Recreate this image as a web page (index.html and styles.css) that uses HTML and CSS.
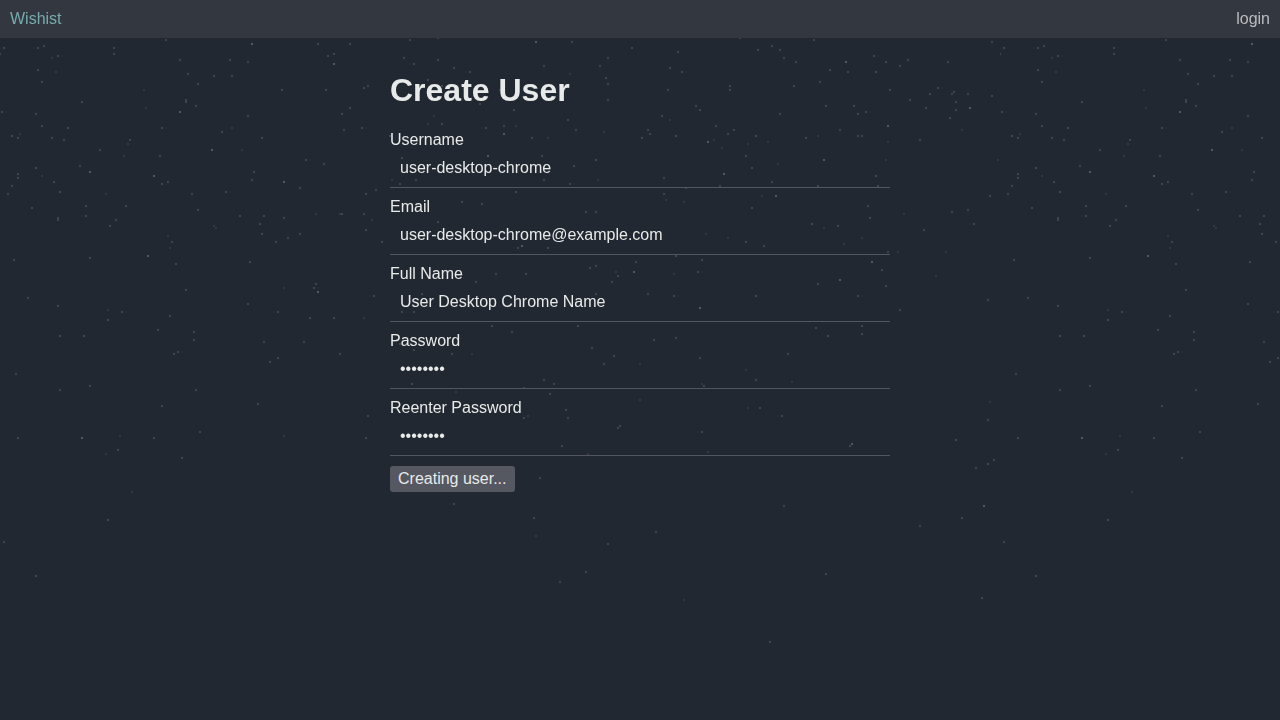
FILE: index.html
```html
<!DOCTYPE html>
<html lang="en">
<head>
  <meta charset="utf-8">
  <meta name="viewport" content="width=device-width, initial-scale=1">
  <title>Wishist</title>
  <link rel="stylesheet" href="styles.css">
</head>
<body>
  <svg class="stars" aria-hidden="true">
    <defs>
      <pattern id="sky" width="1000" height="1000" patternUnits="userSpaceOnUse">
        <g id="star-layers" class="star-layers"></g>
      </pattern>
    </defs>
    <rect width="100%" height="100%" fill="url(#sky)"/>
  </svg>
  <header class="topbar">
    <a class="brand" href="#">Wishist</a>
    <a class="login" href="#">login</a>
  </header>
  <main class="content">
    <h1 class="title">Create User</h1>
    <form class="form">
      <div class="field">
        <label for="username">Username</label>
        <input id="username" type="text" value="user-desktop-chrome">
      </div>
      <div class="field">
        <label for="email">Email</label>
        <input id="email" type="email" value="user-desktop-chrome@example.com">
      </div>
      <div class="field">
        <label for="name">Full Name</label>
        <input id="name" type="text" value="User Desktop Chrome Name">
      </div>
      <div class="field">
        <label for="password">Password</label>
        <input id="password" type="password" value="password">
      </div>
      <div class="field">
        <label for="password2">Reenter Password</label>
        <input id="password2" type="password" value="password">
      </div>
      <button class="submit" type="submit" disabled>Creating user...</button>
    </form>
  </main>
  <script src="stars.js"></script>
</body>
</html>
```
FILE: styles.css
```css
* {
  box-sizing: border-box;
}

body {
  margin: 0;
  min-height: 100vh;
  background: #222831;
  color: #e8eae9;
  font: 16px/18px "Liberation Sans", Arial, sans-serif;
}

.stars {
  position: fixed;
  inset: 0;
  z-index: -1;
  width: 100%;
  height: 100%;
}

.star-layers {
  fill: none;
  stroke-width: 2;
  stroke-linecap: square;
}

.star-bright {
  stroke: #555860;
}

.star-mid {
  stroke: #40444c;
}

.star-dim {
  stroke: #343941;
}

.topbar {
  display: flex;
  justify-content: space-between;
  padding: 10px;
  background: #33373f;
}

.topbar a {
  text-decoration: none;
}

.brand {
  color: #76abae;
}

.login {
  color: #bbbcbf;
}

.content {
  max-width: 520px;
  margin: 0 auto;
  padding: 34px 10px 10px;
}

.title {
  margin: 0 0 23px;
  font-size: 32px;
  line-height: 36px;
}

.form {
  display: flex;
  flex-direction: column;
  align-items: flex-start;
  gap: 10px;
}

.field {
  display: flex;
  flex-direction: column;
  width: 100%;
}

.field input {
  width: 100%;
  height: 39px;
  padding: 10px;
  border: 0;
  border-bottom: 1px solid #53565e;
  border-radius: 0;
  background: transparent;
  color: inherit;
  font: inherit;
  outline: none;
}

.submit {
  padding: 4px 8px;
  border: 0;
  border-radius: 3px;
  background: #555761;
  color: #e8eae9;
  font: inherit;
}
```
FILE: stars.js
```js
// Star centres as "x,y" pairs inside one 1000px tile, grouped by brightness.
const stars = {
  bright: `252,44 180,112 212,150 90,172 154,176 284,182 148,256 318,292 82,438
    536,42 334,64 504,134 488,156 522,246 634,272 846,62 888,126 708,142 824,160
    724,174 776,196 872,262 840,280 700,308 852,444 970,108 984,506`,
  mid: `166,40 318,44 44,46 4,48 38,48 114,48 114,54 0,54 58,56 180,60 230,60 248,62
    38,70 188,74 214,76 232,76 42,82 198,84 282,90 186,100 186,102 82,102 196,106
    2,112 36,114 248,116 42,126 68,128 162,128 222,132 12,136 18,138 52,138 262,138
    64,140 130,140 100,150 160,156 306,160 80,166 36,168 254,172 18,174 18,178
    252,180 54,182 168,182 162,184 12,186 300,188 60,192 226,192 8,194 192,194
    86,206 126,206 32,208 198,210 86,216 240,216 264,216 284,218 58,218 58,220
    116,220 260,224 110,226 262,234 300,234 288,238 172,242 276,242 90,258 14,260
    250,262 176,264 316,284 314,288 186,290 28,298 248,304 58,306 122,312 278,312
    170,316 310,318 108,320 158,330 194,332 60,336 84,336 194,340 264,342 304,342
    178,352 174,354 278,358 270,362 16,374 90,386 60,390 196,390 258,404 162,406
    200,432 18,438 154,438 118,450 182,458 438,38 410,40 572,42 350,44 632,48 334,54
    328,56 404,58 608,58 438,60 414,64 544,66 600,66 454,68 470,72 606,78 428,80
    608,84 368,86 364,88 442,86 326,90 500,90 608,100 480,104 350,108 514,110
    342,114 568,120 442,124 504,126 362,128 486,128 344,130 576,130 390,136 532,138
    542,156 402,158 596,160 324,164 574,166 416,180 544,180 400,184 570,184 376,190
    516,192 366,194 462,202 482,204 586,212 596,212 342,214 364,214 438,222 366,230
    382,242 518,248 548,248 636,262 596,266 590,268 618,276 496,274 526,274 476,282
    612,282 422,294 596,294 374,296 402,312 414,312 334,318 492,326 578,326 512,332
    400,344 592,348 414,350 340,354 452,354 614,356 604,364 544,380 412,384 554,384
    524,388 550,394 566,410 368,416 524,418 568,418 620,426 618,428 366,438 562,446
    540,478 454,504 740,38 814,40 772,46 758,50 780,50 678,52 874,56 784,58 908,60
    796,62 886,62 948,62 900,66 670,68 830,70 682,72 848,72 876,72 820,82 730,86
    794,86 938,88 668,90 730,90 890,90 954,92 930,94 952,94 910,100 956,102 696,106
    826,106 854,106 926,108 700,110 956,110 866,112 780,114 858,114 662,116 950,118
    716,126 648,130 734,130 840,130 650,134 728,134 676,136 756,136 858,136 862,136
    642,138 806,138 920,140 746,156 752,168 876,176 664,178 772,182 720,186 818,186
    878,186 686,188 664,194 868,206 752,208 952,212 870,218 812,224 838,226 924,230
    746,242 764,246 888,252 676,256 702,260 882,270 698,272 818,284 886,286 648,294
    674,296 756,296 858,296 900,310 862,326 816,328 862,334 828,336 676,338 654,340
    788,354 700,358 756,380 704,386 760,408 782,416 702,432 850,446 956,440 992,42
    968,94 992,96 990,196 968,210 974,224 988,300 988,420 994,460 988,464 976,468
    108,520 4,542 36,576 534,518 608,544 656,532 586,572 560,582 770,642 784,506
    962,518 920,526 826,574 982,598`,
  dim: `52,58 56,72 144,90 146,108 232,128 20,134 128,144 242,150 124,156 42,176
    106,194 316,214 214,226 216,228 168,236 170,248 284,288 108,310 120,436 284,436
    106,454 570,74 434,116 428,124 516,126 604,132 548,138 392,180 598,180 340,214
    372,220 616,272 364,318 472,354 456,392 528,416 588,454 670,120 818,136 714,140
    768,142 888,142 748,144 722,148 886,160 778,164 762,196 666,200 684,202 904,214
    824,228 706,234 728,238 862,238 844,244 898,252 946,252 674,274 936,276 640,364
    746,370 792,382 702,384 640,400 748,408 708,452 962,130 998,160 990,402 132,492
    536,536 684,600`
};

const layers = document.getElementById("star-layers");
for (const [level, points] of Object.entries(stars)) {
  const path = document.createElementNS("http://www.w3.org/2000/svg", "path");
  path.setAttribute("class", "star-" + level);
  path.setAttribute("d", points.trim().split(/\s+/).map(p => "M" + p + "h0").join(""));
  layers.append(path);
}
```
